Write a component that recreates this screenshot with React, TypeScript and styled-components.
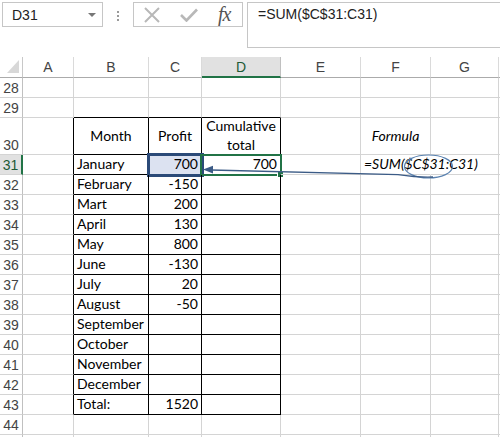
import React from 'react';
import styled, { createGlobalStyle } from 'styled-components';

const GlobalStyle = createGlobalStyle`
    body {
        margin: 0;
        background: #fff;
    }
`;

const GRID = '#d4d4d4';
const INK = '#000';
const GREEN = '#217346';

const Frame = styled.div`
    position: relative;
    width: 500px;
    height: 437px;
    overflow: hidden;
    background: #fff;
    font-family: Lato, "Liberation Sans", sans-serif;
    font-size: 14px;
    color: #000;
`;

const TopBar = styled.div`
    height: 57px;
    box-sizing: border-box;
    display: flex;
    align-items: flex-start;
    padding-top: 2px;
    padding-left: 2px;
`;

const NameBox = styled.div`
    width: 101px;
    height: 25px;
    box-sizing: border-box;
    border: 1px solid #c6c6c6;
    display: flex;
    align-items: center;
    justify-content: space-between;
    padding: 0 6px 0 9px;
    font-family: "Liberation Sans", sans-serif;
    font-size: 14px;
    color: #222;
`;

const DropArrow = styled.span`
    width: 0;
    height: 0;
    border-left: 4px solid transparent;
    border-right: 4px solid transparent;
    border-top: 4px solid #777;
`;

const Dots = styled.div`
    width: 2px;
    margin: 9px 14px 0 14px;
    height: 11px;
    background: repeating-linear-gradient(to bottom, #9a9a9a 0 2px, transparent 2px 4px);
`;

const ToolBox = styled.div`
    width: 110px;
    height: 25px;
    box-sizing: border-box;
    border: 1px solid #c6c6c6;
    display: flex;
    align-items: center;
    padding-left: 10px;
    gap: 20px;
`;

const FxLabel = styled.span`
    font-family: "Liberation Serif", serif;
    font-style: italic;
    font-size: 20px;
    color: #555;
    margin-left: 0;
    letter-spacing: -1px;
`;

const FormulaInput = styled.div`
    flex: 1;
    margin-left: 4px;
    height: 46px;
    box-sizing: border-box;
    border: 1px solid #c6c6c6;
    border-right: none;
    padding: 3px 0 0 10px;
    font-family: "Liberation Sans", sans-serif;
    font-size: 14px;
    color: #222;
`;

const Sheet = styled.div<{ $cols: string; $rows: string }>`
    display: grid;
    grid-template-columns: ${p => p.$cols};
    grid-template-rows: ${p => p.$rows};
`;

const Corner = styled.div`
    position: relative;
    box-sizing: border-box;
    border-right: 1px solid #c8c8c8;
    border-bottom: 1px solid #ababab;
    &::after {
        content: '';
        position: absolute;
        right: 3px;
        bottom: 4px;
        width: 0;
        height: 0;
        border-left: 12px solid transparent;
        border-bottom: 13px solid #d8d8d8;
    }
`;

const ColHeader = styled.div<{ $active?: boolean }>`
    box-sizing: border-box;
    display: flex;
    align-items: center;
    justify-content: center;
    background: ${p => (p.$active ? '#e1e1e1' : '#fff')};
    border-right: 1px solid ${p => (p.$active ? '#c0c0c0' : '#dadada')};
    border-bottom: ${p => (p.$active ? `2px solid ${GREEN}` : '1px solid #ababab')};
    padding-top: ${p => (p.$active ? '1px' : '0')};
    font-family: "Liberation Sans", sans-serif;
    font-size: 14px;
    color: ${p => (p.$active ? '#1e5a36' : '#444')};
`;

const RowHeader = styled.div<{ $active?: boolean; $tall?: boolean }>`
    box-sizing: border-box;
    display: flex;
    align-items: ${p => (p.$tall ? 'flex-end' : 'center')};
    justify-content: center;
    padding-bottom: ${p => (p.$tall ? '1px' : '0')};
    background: ${p => (p.$active ? '#e1e1e1' : '#fff')};
    border-right: ${p => (p.$active ? `2px solid ${GREEN}` : '1px solid #c0c0c0')};
    border-bottom: 1px solid ${GRID};
    font-family: "Liberation Sans", sans-serif;
    font-size: 14px;
    color: ${p => (p.$active ? '#1e5a36' : '#444')};
`;

const Cell = styled.div<{
    $right: string;
    $bottom: string;
    $align: 'left' | 'right' | 'center';
    $valign: 'center' | 'flex-end';
    $italic?: boolean;
    $fill?: string;
}>`
    position: relative;
    box-sizing: border-box;
    display: flex;
    align-items: ${p => p.$valign};
    justify-content: ${p => (p.$align === 'right' ? 'flex-end' : p.$align === 'center' ? 'center' : 'flex-start')};
    text-align: ${p => p.$align};
    padding: 0 3px 1px 3px;
    border-right: 1px solid ${p => p.$right};
    border-bottom: 1px solid ${p => p.$bottom};
    background: ${p => p.$fill || 'transparent'};
    font-style: ${p => (p.$italic ? 'italic' : 'normal')};
    white-space: nowrap;
    line-height: 18px;
    z-index: ${p => (p.$italic ? 1 : 0)};
`;

const WrapText = styled.span`
    white-space: normal;
    line-height: 19px;
    margin-top: -2px;
`;

const SourceMark = styled.div`
    position: absolute;
    left: -2px;
    top: -2px;
    right: -3px;
    bottom: -3px;
    border: 3px solid #2b4a78;
    z-index: 3;
`;

const ActiveMark = styled.div`
    position: absolute;
    left: -2px;
    top: -1px;
    right: -2px;
    bottom: -2px;
    border: 2px solid ${GREEN};
    z-index: 2;
`;

const FillHandle = styled.div`
    position: absolute;
    right: -4px;
    bottom: -4px;
    width: 5px;
    height: 5px;
    background: ${GREEN};
    border: 1px solid #fff;
    z-index: 4;
`;

const Overlay = styled.svg`
    position: absolute;
    left: 0;
    top: 0;
    pointer-events: none;
    z-index: 5;
`;

const cols = ['A', 'B', 'C', 'D', 'E', 'F', 'G', 'H'];
const widths = [51, 75, 53, 79, 80, 70, 68, 40];
const rows = Array.from({ length: 18 }, (_, i) => 28 + i);
const rowHeight = (r: number) => (r === 30 ? 37 : r === 45 ? 10 : 20);

type Content = {
    text: string;
    align?: 'left' | 'right' | 'center';
    italic?: boolean;
    wrap?: boolean;
};

const months = [
    ['January', '700'],
    ['February', '-150'],
    ['Mart', '200'],
    ['April', '130'],
    ['May', '800'],
    ['June', '-130'],
    ['July', '20'],
    ['August', '-50'],
    ['September', ''],
    ['October', ''],
    ['November', ''],
    ['December', ''],
    ['Total:', '1520'],
];

const contents: Record<string, Content> = {
    B30: { text: 'Month', align: 'center' },
    C30: { text: 'Profit', align: 'center' },
    D30: { text: 'Cumulative total', align: 'center', wrap: true },
    F30: { text: 'Formula', align: 'center', italic: true },
    D31: { text: '700', align: 'right' },
    F31: { text: '=SUM($C$31:C31)', align: 'left', italic: true },
};
months.forEach(([m, v], i) => {
    contents[`B${31 + i}`] = { text: m, align: 'left' };
    if (v) contents[`C${31 + i}`] = { text: v, align: 'right' };
});

const inTable = (c: number, r: number) => c >= 1 && c <= 3 && r >= 30 && r <= 43;

const App = () => {
    const colTemplate = `23px ${widths.map(w => `${w}px`).join(' ')}`;
    const rowTemplate = `21px ${rows.map(r => `${rowHeight(r)}px`).join(' ')}`;

    return (
        <Frame>
            <GlobalStyle />
            <TopBar>
                <NameBox>
                    D31
                    <DropArrow />
                </NameBox>
                <Dots />
                <ToolBox>
                    <svg width="16" height="16" viewBox="0 0 16 16">
                        <path d="M1 1 L15 15 M15 1 L1 15" stroke="#b8b8b8" strokeWidth="2" fill="none" />
                    </svg>
                    <svg width="18" height="14" viewBox="0 0 18 14">
                        <path d="M1 7 L6.5 12.5 L17 1.5" stroke="#b8b8b8" strokeWidth="2.6" fill="none" />
                    </svg>
                    <FxLabel>fx</FxLabel>
                </ToolBox>
                <FormulaInput>=SUM($C$31:C31)</FormulaInput>
            </TopBar>
            <Sheet $cols={colTemplate} $rows={rowTemplate}>
                <Corner />
                {cols.map(c => (
                    <ColHeader key={c} $active={c === 'D'}>{c === 'H' ? '' : c}</ColHeader>
                ))}
                {rows.map(r => (
                    <React.Fragment key={r}>
                        <RowHeader $active={r === 31} $tall={r === 30}>{r === 45 ? '' : r}</RowHeader>
                        {cols.map((c, ci) => {
                            const key = `${c}${r}`;
                            const item = contents[key];
                            const tableRight = inTable(ci, r) || (ci === 0 && r >= 30 && r <= 43);
                            const tableBottom = inTable(ci, r) || (ci >= 1 && ci <= 3 && r === 29);
                            let right = tableRight ? INK : GRID;
                            if (key === 'F31') right = '#fff';
                            return (
                                <Cell
                                    key={key}
                                    $right={right}
                                    $bottom={tableBottom ? INK : GRID}
                                    $align={item?.align || 'left'}
                                    $valign={r === 30 ? 'center' : 'flex-end'}
                                    $italic={item?.italic}
                                    $fill={key === 'C31' ? '#dce2f1' : undefined}
                                >
                                    {item && (item.wrap ? <WrapText>{item.text}</WrapText> : item.text)}
                                    {key === 'C31' && <SourceMark />}
                                    {key === 'D31' && (
                                        <>
                                            <ActiveMark />
                                            <FillHandle />
                                        </>
                                    )}
                                </Cell>
                            );
                        })}
                    </React.Fragment>
                ))}
            </Sheet>
            <Overlay width="500" height="437" viewBox="0 0 500 437">
                <ellipse cx="428.5" cy="166.5" rx="24" ry="11.5" fill="none" stroke="#5a82b0" strokeWidth="1.2" />
                <path d="M211 170 L398 174.6 Q418 177.6 433 177" fill="none" stroke="#3b5b86" strokeWidth="1.4" />
                <path d="M203 169.6 L213 165.8 L213 173.6 Z" fill="#3b5b86" />
            </Overlay>
        </Frame>
    );
};

export default App;
